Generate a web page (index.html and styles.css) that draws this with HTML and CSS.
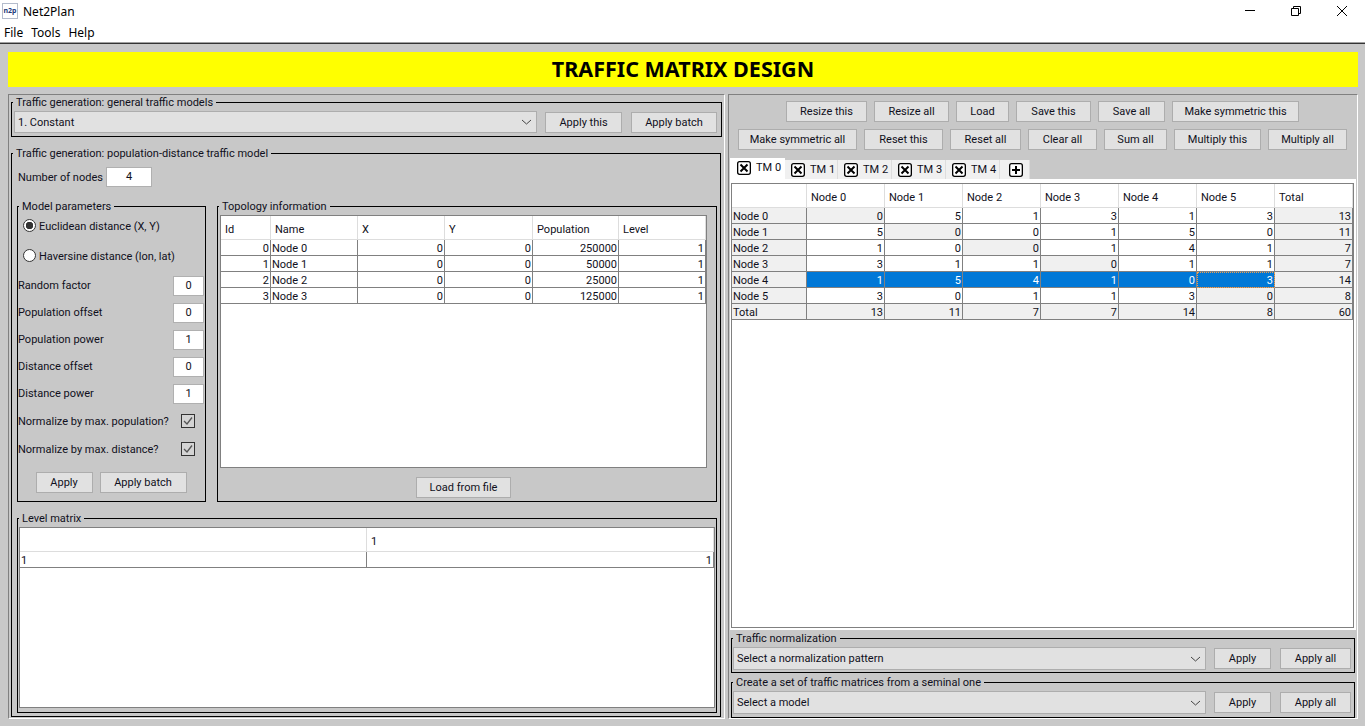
FILE: index.html
```html
<!DOCTYPE html>
<html>

<head>
    <title>Net2Plan</title>
    <link rel="stylesheet" href="styles.css">
</head>

<body>
    <div class="titlebar">
        <span class="app-icon">n2p</span>
        <span class="app-name">Net2Plan</span>
        <div class="window-controls">
            <span class="window-btn"><svg width="12" height="12" viewBox="0 0 12 12"><path d="M1 5.500h10" stroke="#000" fill="none"/></svg></span>
            <span class="window-btn"><svg width="12" height="12" viewBox="0 0 12 12"><path d="M1.500 3.500h7v7h-7zM3.500 3.500v-2h7v7h-2" stroke="#000" fill="none"/></svg></span>
            <span class="window-btn"><svg width="12" height="12" viewBox="0 0 12 12"><path d="M1 1l10 10M11 1L1 11" stroke="#000" fill="none"/></svg></span>
        </div>
    </div>
    <div class="menubar">
        <span>File</span>
        <span>Tools</span>
        <span>Help</span>
    </div>

    <div class="workspace">
        <div class="banner">TRAFFIC MATRIX DESIGN</div>

        <div class="panels">
            <!-- left side -->
            <div class="panel panel-left">
                <fieldset class="group group-general">
                    <legend>Traffic generation: general traffic models</legend>
                    <div class="action-row">
                        <div class="combo">1. Constant<svg class="chevron" width="11" height="6" viewBox="0 0 11 6"><path d="M1 1l4.500 4 4.500-4" stroke="#444" fill="none"/></svg></div>
                        <button class="btn btn-this">Apply this</button>
                        <button class="btn btn-batch">Apply batch</button>
                    </div>
                </fieldset>

                <fieldset class="group group-population">
                    <legend>Traffic generation: population-distance traffic model</legend>
                    <div class="population-body">
                        <div class="nodes-row">
                            <span class="nodes-label">Number of nodes</span>
                            <div class="num num-nodes">4</div>
                        </div>

                        <div class="params-row">
                            <fieldset class="group">
                                <legend>Model parameters</legend>
                                <div class="model-body">
                                    <div class="radio-row"><span class="radio radio-on"></span><span class="radio-text">Euclidean distance (X, Y)</span></div>
                                    <div class="radio-row"><span class="radio"></span><span class="radio-text">Haversine distance (lon, lat)</span></div>
                                    <div class="field"><span>Random factor</span><div class="num">0</div></div>
                                    <div class="field"><span>Population offset</span><div class="num">0</div></div>
                                    <div class="field"><span>Population power</span><div class="num">1</div></div>
                                    <div class="field"><span>Distance offset</span><div class="num">0</div></div>
                                    <div class="field"><span>Distance power</span><div class="num">1</div></div>
                                    <div class="check-row"><span>Normalize by max. population?</span>
                                        <svg class="check" width="14" height="14" viewBox="0 0 14 14"><rect x="0.500" y="0.500" width="13" height="13" fill="#d4d4d4" stroke="#333"/><path d="M3 7l3 3 5-6.500" stroke="#555" stroke-width="1.300" fill="none"/></svg>
                                    </div>
                                    <div class="check-row"><span>Normalize by max. distance?</span>
                                        <svg class="check" width="14" height="14" viewBox="0 0 14 14"><rect x="0.500" y="0.500" width="13" height="13" fill="#d4d4d4" stroke="#333"/><path d="M3 7l3 3 5-6.500" stroke="#555" stroke-width="1.300" fill="none"/></svg>
                                    </div>
                                    <div class="model-buttons">
                                        <button class="btn btn-apply">Apply</button>
                                        <button class="btn btn-batch-small">Apply batch</button>
                                    </div>
                                </div>
                            </fieldset>

                            <fieldset class="group">
                                <legend>Topology information</legend>
                                <div class="topology-body">
                                    <div class="table-frame topology-frame">
                                        <table class="grid topology-table">
                                            <thead>
                                                <tr><th>Id</th><th>Name</th><th>X</th><th>Y</th><th>Population</th><th>Level</th></tr>
                                            </thead>
                                            <tbody>
                                                <tr><td class="r">0</td><td>Node 0</td><td class="r">0</td><td class="r">0</td><td class="r">250000</td><td class="r">1</td></tr>
                                                <tr><td class="r">1</td><td>Node 1</td><td class="r">0</td><td class="r">0</td><td class="r">50000</td><td class="r">1</td></tr>
                                                <tr><td class="r">2</td><td>Node 2</td><td class="r">0</td><td class="r">0</td><td class="r">25000</td><td class="r">1</td></tr>
                                                <tr><td class="r">3</td><td>Node 3</td><td class="r">0</td><td class="r">0</td><td class="r">125000</td><td class="r">1</td></tr>
                                            </tbody>
                                        </table>
                                    </div>
                                    <button class="btn btn-load">Load from file</button>
                                </div>
                            </fieldset>
                        </div>

                        <fieldset class="group group-level">
                            <legend>Level matrix</legend>
                            <div class="level-body">
                                <div class="table-frame level-frame">
                                    <table class="grid level-table">
                                        <thead>
                                            <tr><th></th><th>1</th></tr>
                                        </thead>
                                        <tbody>
                                            <tr><td>1</td><td class="r">1</td></tr>
                                        </tbody>
                                    </table>
                                </div>
                            </div>
                        </fieldset>
                    </div>
                </fieldset>
            </div>

            <!-- right side -->
            <div class="panel panel-right">
                <div class="toolbar toolbar-a">
                    <button class="btn">Resize this</button>
                    <button class="btn">Resize all</button>
                    <button class="btn">Load</button>
                    <button class="btn">Save this</button>
                    <button class="btn">Save all</button>
                    <button class="btn">Make symmetric this</button>
                </div>
                <div class="toolbar toolbar-b">
                    <button class="btn">Make symmetric all</button>
                    <button class="btn">Reset this</button>
                    <button class="btn">Reset all</button>
                    <button class="btn">Clear all</button>
                    <button class="btn">Sum all</button>
                    <button class="btn">Multiply this</button>
                    <button class="btn">Multiply all</button>
                </div>

                <div class="tabs">
                    <div class="tab tab-active"><svg class="tab-icon" width="14" height="14" viewBox="0 0 14 14"><rect x="0.650" y="0.650" width="12.700" height="12.700" rx="2" fill="#fff" stroke="#000" stroke-width="1.300"/><path d="M3.500 3.500l7 7M10.500 3.500l-7 7" stroke="#000" stroke-width="2" fill="none"/></svg>TM 0</div>
                    <div class="tab"><svg class="tab-icon" width="14" height="14" viewBox="0 0 14 14"><rect x="0.650" y="0.650" width="12.700" height="12.700" rx="2" fill="#fff" stroke="#000" stroke-width="1.300"/><path d="M3.500 3.500l7 7M10.500 3.500l-7 7" stroke="#000" stroke-width="2" fill="none"/></svg>TM 1</div>
                    <div class="tab"><svg class="tab-icon" width="14" height="14" viewBox="0 0 14 14"><rect x="0.650" y="0.650" width="12.700" height="12.700" rx="2" fill="#fff" stroke="#000" stroke-width="1.300"/><path d="M3.500 3.500l7 7M10.500 3.500l-7 7" stroke="#000" stroke-width="2" fill="none"/></svg>TM 2</div>
                    <div class="tab"><svg class="tab-icon" width="14" height="14" viewBox="0 0 14 14"><rect x="0.650" y="0.650" width="12.700" height="12.700" rx="2" fill="#fff" stroke="#000" stroke-width="1.300"/><path d="M3.500 3.500l7 7M10.500 3.500l-7 7" stroke="#000" stroke-width="2" fill="none"/></svg>TM 3</div>
                    <div class="tab"><svg class="tab-icon" width="14" height="14" viewBox="0 0 14 14"><rect x="0.650" y="0.650" width="12.700" height="12.700" rx="2" fill="#fff" stroke="#000" stroke-width="1.300"/><path d="M3.500 3.500l7 7M10.500 3.500l-7 7" stroke="#000" stroke-width="2" fill="none"/></svg>TM 4</div>
                    <div class="tab tab-add"><svg class="tab-icon" width="14" height="14" viewBox="0 0 14 14"><rect x="0.650" y="0.650" width="12.700" height="12.700" rx="2" fill="#fff" stroke="#000" stroke-width="1.300"/><path d="M7 3v8M3 7h8" stroke="#000" stroke-width="2" fill="none"/></svg></div>
                </div>

                <div class="tab-frame">
                    <div class="table-frame matrix-frame">
                        <table class="grid matrix-table">
                            <thead>
                                <tr><th></th><th>Node 0</th><th>Node 1</th><th>Node 2</th><th>Node 3</th><th>Node 4</th><th>Node 5</th><th>Total</th></tr>
                            </thead>
                            <tbody>
                                <tr><td class="shade">Node 0</td><td class="r shade">0</td><td class="r">5</td><td class="r">1</td><td class="r">3</td><td class="r">1</td><td class="r">3</td><td class="r shade">13</td></tr>
                                <tr><td class="shade">Node 1</td><td class="r">5</td><td class="r shade">0</td><td class="r">0</td><td class="r">1</td><td class="r">5</td><td class="r">0</td><td class="r shade">11</td></tr>
                                <tr><td class="shade">Node 2</td><td class="r">1</td><td class="r">0</td><td class="r shade">0</td><td class="r">1</td><td class="r">4</td><td class="r">1</td><td class="r shade">7</td></tr>
                                <tr><td class="shade">Node 3</td><td class="r">3</td><td class="r">1</td><td class="r">1</td><td class="r shade">0</td><td class="r">1</td><td class="r">1</td><td class="r shade">7</td></tr>
                                <tr><td class="shade">Node 4</td><td class="r picked">1</td><td class="r picked">5</td><td class="r picked">4</td><td class="r picked">1</td><td class="r picked">0</td><td class="r picked focused">3</td><td class="r shade">14</td></tr>
                                <tr><td class="shade">Node 5</td><td class="r">3</td><td class="r">0</td><td class="r">1</td><td class="r">1</td><td class="r">3</td><td class="r shade">0</td><td class="r shade">8</td></tr>
                                <tr><td class="shade">Total</td><td class="r shade">13</td><td class="r shade">11</td><td class="r shade">7</td><td class="r shade">7</td><td class="r shade">14</td><td class="r shade">8</td><td class="r shade">60</td></tr>
                            </tbody>
                        </table>
                    </div>
                </div>

                <fieldset class="group group-bottom">
                    <legend>Traffic normalization</legend>
                    <div class="action-row action-row-bottom">
                        <div class="combo">Select a normalization pattern<svg class="chevron" width="11" height="6" viewBox="0 0 11 6"><path d="M1 1l4.500 4 4.500-4" stroke="#444" fill="none"/></svg></div>
                        <button class="btn btn-apply">Apply</button>
                        <button class="btn btn-all">Apply all</button>
                    </div>
                </fieldset>
                <fieldset class="group group-bottom group-bottom-last">
                    <legend>Create a set of traffic matrices from a seminal one</legend>
                    <div class="action-row action-row-bottom">
                        <div class="combo">Select a model<svg class="chevron" width="11" height="6" viewBox="0 0 11 6"><path d="M1 1l4.500 4 4.500-4" stroke="#444" fill="none"/></svg></div>
                        <button class="btn btn-apply">Apply</button>
                        <button class="btn btn-all">Apply all</button>
                    </div>
                </fieldset>
            </div>
        </div>
    </div>
</body>

</html>
```

FILE: styles.css
```css
* {
    box-sizing: border-box;
}

body {
    margin: 0;
    width: 1365px;
    height: 726px;
    overflow: hidden;
    background-color: #c8c8c8;
    font-family: Roboto, Arial, sans-serif;
    font-size: 11px;
    color: #101020;
}

/* window chrome */
.titlebar {
    height: 22px;
    background-color: #fff;
    display: flex;
    align-items: center;
    padding-left: 2px;
    font-family: "Noto Sans", Arial, sans-serif;
    font-size: 12px;
    color: #000;
}

.app-icon {
    width: 16px;
    height: 16px;
    border: 1px solid #b4bccc;
    font-size: 7px;
    font-weight: bold;
    line-height: 13px;
    text-align: center;
    color: #223a7a;
}

.app-name {
    margin: 1px 0 0 5px;
}

.window-controls {
    margin-left: auto;
    display: flex;
}

.window-btn {
    width: 46px;
    height: 22px;
    display: flex;
    align-items: center;
    justify-content: center;
}

.menubar {
    height: 20px;
    background-color: #fff;
    display: flex;
    align-items: center;
    gap: 8px;
    padding: 1px 0 0 4px;
    font-family: "Noto Sans", Arial, sans-serif;
    font-size: 12px;
    color: #000;
}

.workspace {
    height: 684px;
    border-top: 1px solid #a0a0a0;
    box-shadow: inset 0 1px 0 #333;
    padding: 9px 7px 0 8px;
}

.banner {
    height: 35px;
    background-color: #ff0;
    color: #000;
    font-family: "Noto Sans", Arial, sans-serif;
    font-size: 21.500px;
    font-weight: bold;
    line-height: 34px;
    text-align: center;
}

.panels {
    margin-top: 7px;
    height: 625px;
    display: grid;
    grid-template-columns: 717px 630px;
    gap: 3px;
}

.panel {
    border: 1px solid;
    border-color: #808080 #fff #fff #808080;
}

.panel-left {
    padding: 1px 2px;
}

/* group boxes */
.group {
    margin: 0;
    padding: 0;
    min-width: 0;
    border: 1px solid #000;
}

.group legend {
    margin-left: 1px;
    padding: 0 3px;
    height: 13px;
    line-height: 13px;
    white-space: nowrap;
}

.group-general {
    width: 711px;
    height: 41px;
}

.group-population {
    margin-top: 10px;
    width: 710px;
    height: 570px;
}

.population-body {
    padding: 7px 3px 0 5px;
}

.nodes-row {
    height: 20px;
    display: flex;
    align-items: center;
    padding-left: 1px;
}

.nodes-label {
    width: 88px;
    white-space: nowrap;
}

.num {
    width: 31px;
    height: 20px;
    background-color: #fff;
    border: 1px solid #b0b0b0;
    line-height: 18px;
    text-align: center;
}

.num-nodes {
    width: 46px;
}

.params-row {
    margin-top: 13px;
    height: 302px;
    display: grid;
    grid-template-columns: 189px 500px;
    gap: 11px;
}

.group-level {
    margin-top: 10px;
    width: 700px;
    height: 201px;
}

.model-body {
    padding: 0 1px 0 0;
    display: flex;
    flex-direction: column;
}

.radio-row {
    height: 30px;
    display: flex;
    align-items: center;
    gap: 3px;
    padding-left: 5px;
    margin-top: -3px;
    margin-bottom: 3px;
}

.radio-text {
    padding-top: 2px;
}

.radio {
    width: 13px;
    height: 13px;
    border-radius: 50%;
    border: 1px solid #333;
    background-color: #fff;
}

.radio-on {
    background-image: radial-gradient(circle, #333 0, #333 3.500px, #fff 4px);
}

.field {
    height: 27px;
    display: flex;
    align-items: center;
    justify-content: space-between;
}

.radio-row + .field {
    margin-top: -1px;
}

.check-row {
    height: 28px;
    display: flex;
    align-items: center;
    justify-content: space-between;
    padding-right: 9px;
}

.model-buttons {
    margin-top: 9px;
    display: flex;
    justify-content: center;
    gap: 7px;
}

.topology-body {
    padding: 2px 0 0 2px;
}

.btn-load {
    display: block;
    width: 95px;
    margin: 9px 0 0 196px;
}

/* buttons and combos */
.btn {
    height: 21px;
    padding: 0;
    background-color: #e1e1e1;
    border: 1px solid #adadad;
    font-family: inherit;
    font-size: 11px;
    color: #101020;
}

.btn-this {
    width: 77px;
}

.btn-batch {
    width: 86px;
    margin-left: 1px;
}

.btn-apply {
    width: 57px;
}

.btn-batch-small {
    width: 87px;
}

.btn-all {
    width: 71px;
    margin-left: 1px;
}

.combo {
    flex: 1;
    height: 22px;
    background-color: #e1e1e1;
    border: 1px solid #adadad;
    padding-left: 3px;
    display: flex;
    align-items: center;
    justify-content: space-between;
}

.chevron {
    margin-right: 4px;
}

.action-row {
    padding: 2px 4px 0 2px;
    display: flex;
    align-items: center;
    gap: 8px;
}

.action-row-bottom {
    padding: 2px 3px 0 1px;
}

.action-row-bottom .combo {
    height: 23px;
}

/* tables */
.table-frame {
    background-color: #fff;
    border: 1px solid #808080;
}

.topology-frame {
    width: 487px;
    height: 253px;
}

.level-body {
    padding: 2px 0 0 1px;
}

.level-frame {
    width: 696px;
    height: 181px;
}

.matrix-frame {
    height: 445px;
}

.grid {
    border-collapse: separate;
    border-spacing: 0;
    table-layout: fixed;
}

.grid th {
    height: 24px;
    padding: 3px 0 0 4px;
    background-color: #fff;
    border-right: 1px solid #ddd;
    border-bottom: 1px solid #ddd;
    font-weight: normal;
    text-align: left;
}

.grid td {
    height: 16px;
    padding: 2px 1px 0;
    border-right: 1px solid #808080;
    border-bottom: 1px solid #808080;
    line-height: 13px;
    overflow: hidden;
    white-space: nowrap;
}

.grid td.r {
    text-align: right;
}

.grid td.shade {
    background-color: #f0f0f0;
}

.grid td.picked {
    background-color: #0078d7;
    color: #fff;
}

.grid td.focused {
    outline: 1px dotted #f0a050;
    outline-offset: -1px;
}

.topology-table {
    width: 485px;
}

.topology-table th:nth-child(1) { width: 50px; }
.topology-table th:nth-child(2) { width: 87px; }
.topology-table th:nth-child(3) { width: 87px; }
.topology-table th:nth-child(4) { width: 88px; }
.topology-table th:nth-child(5) { width: 86px; }
.topology-table th:nth-child(6) { width: 87px; }

.level-table {
    width: 694px;
}

.level-table th {
    width: 347px;
}

.matrix-table {
    width: 621px;
}

.matrix-table th {
    width: 78px;
}

.matrix-table th:first-child {
    width: 75px;
}

/* right side */
.toolbar {
    display: grid;
    justify-content: center;
    gap: 7px;
    padding-right: 1px;
}

.toolbar-a {
    margin-top: 6px;
    grid-template-columns: 81px 75px 53px 75px 67px 127px;
}

.toolbar-b {
    margin-top: 7px;
    grid-template-columns: 119px 79px 71px 69px 63px 87px 79px;
}

.tabs {
    margin: 8px 0 0 1px;
    height: 21px;
    display: flex;
    align-items: flex-end;
}

.tab {
    width: 54px;
    height: 19px;
    background-color: #f0f0f0;
    border-right: 1px solid #ddd;
    display: flex;
    align-items: center;
    gap: 5px;
    padding: 0 0 0 6px;
}

.tab:nth-child(2) {
    width: 53px;
}

.tab-active {
    width: 55px;
    height: 21px;
    background-color: #fff;
    padding: 0 0 2px 7px;
    border-right: 0;
}

.tab-add {
    width: 30px;
    padding-left: 9px;
}

.tab-icon {
    flex: none;
}

.tab-frame {
    margin-left: 1px;
    height: 451px;
    width: 626px;
    background-color: #fff;
    padding: 4px 2px 2px 1px;
}

.group-bottom {
    margin: 2px 0 0 2px;
    width: 624px;
    height: 41px;
}

.group-bottom-last {
    margin-top: 3px;
    height: 42px;
}
```
